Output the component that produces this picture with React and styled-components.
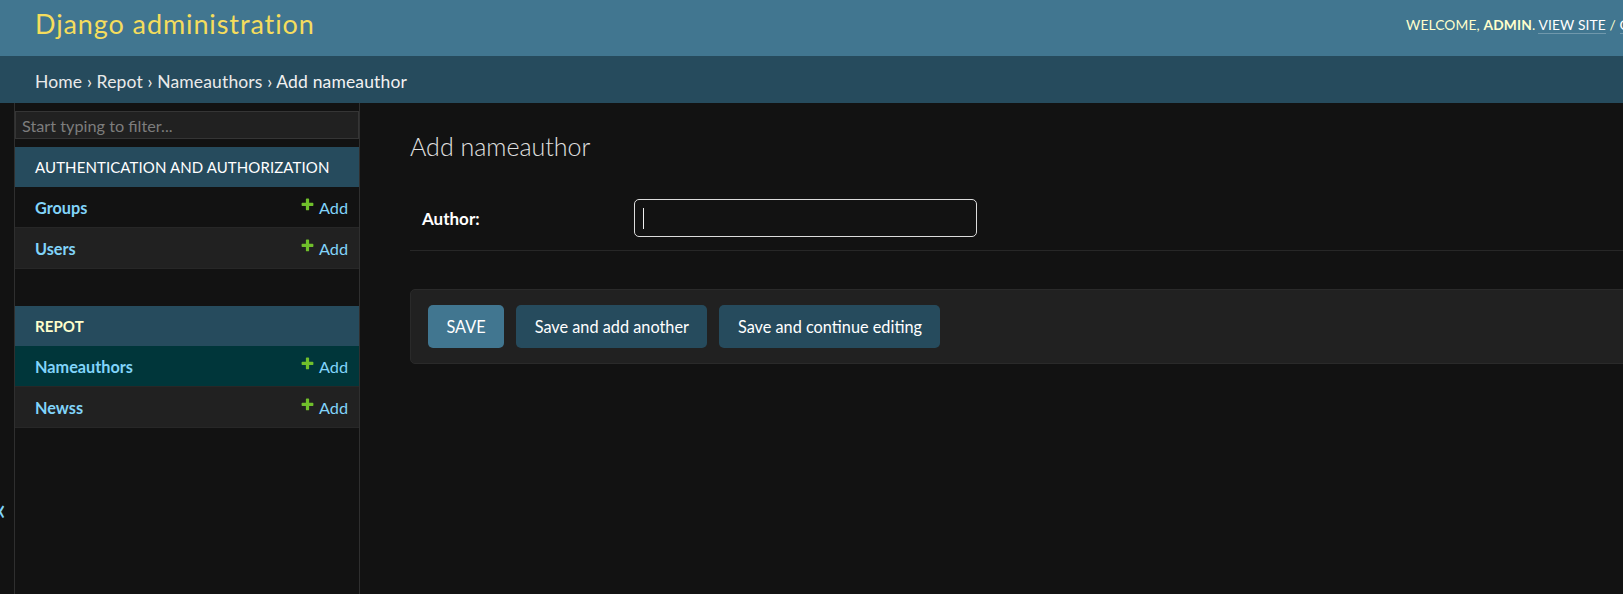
import React from "react";
import styled, { createGlobalStyle } from "styled-components";

const GlobalStyle = createGlobalStyle`
  html, body {
    margin: 0;
    padding: 0;
    background: #121212;
    overflow: hidden;
  }
  body {
    font-family: Lato, "Open Sans", sans-serif;
    color: #eeeeee;
  }
`;

const Page = styled.div`
  width: 1760px;
  margin-left: -15px;
  min-height: 594px;
  display: flex;
  flex-direction: column;
  background: #121212;
`;

const Header = styled.header`
  height: 56px;
  box-sizing: border-box;
  padding: 0 50px 8px;
  display: flex;
  align-items: center;
  background: #417690;
`;

const Branding = styled.div`
  flex: 0 0 1371px;
`;

const SiteName = styled.h1`
  margin: 0;
  font-size: 27px;
  font-weight: 400;
  letter-spacing: 0.9px;
  color: #f5dd5d;
  line-height: 1.2;
`;

const UserTools = styled.div`
  font-size: 13.75px;
  letter-spacing: 0.15px;
  text-transform: uppercase;
  color: #ffffcc;
  white-space: nowrap;

  strong {
    font-weight: 700;
  }
`;

const ToolLink = styled.a`
  color: #ffffff;
  text-decoration: none;
  border-bottom: 1px solid rgba(255, 255, 255, 0.25);
`;

const Breadcrumbs = styled.nav`
  height: 47px;
  box-sizing: border-box;
  padding: 3px 50px 0;
  display: flex;
  align-items: center;
  background: #264b5d;
  color: #f2f2f2;
  font-size: 17.5px;
  letter-spacing: 0.15px;
`;

const Crumb = styled.a`
  color: #eaeaea;
  text-decoration: none;
`;

const Main = styled.div`
  display: flex;
  flex: 1;
  min-height: 491px;
`;

const Toggle = styled.button`
  flex: 0 0 30px;
  width: 30px;
  box-sizing: border-box;
  border: 0;
  border-right: 1px solid #2f2f2f;
  background: #121212;
  color: #81d4fa;
  font-family: Lato, sans-serif;
  font-size: 30px;
  line-height: 1;
  padding: 390px 0 0;
  display: flex;
  justify-content: center;
  align-items: flex-start;
`;

const Sidebar = styled.nav`
  flex: 0 0 345px;
  box-sizing: border-box;
  border-right: 1px solid #2f2f2f;
  padding-top: 8px;
`;

const Filter = styled.input`
  display: block;
  width: 100%;
  height: 28px;
  box-sizing: border-box;
  margin: 0 0 8px;
  padding: 0 6px;
  border: 1px solid #353535;
  background: #212121;
  color: #eeeeee;
  font-family: Lato, sans-serif;
  font-size: 16.25px;

  &::placeholder {
    color: #7d7d7d;
  }
`;

const Module = styled.div`
  margin-bottom: 37px;
`;

const Caption = styled.div`
  height: 40px;
  display: flex;
  align-items: center;
  padding-left: 20px;
  background: #264b5d;
  color: ${(p) => (p.$current ? "#ffffcc" : "#ffffff")};
  font-weight: ${(p) => (p.$current ? 700 : 400)};
  font-size: 15px;
  letter-spacing: 0.1px;
  text-transform: uppercase;
  white-space: nowrap;
`;

const rowBg = {
  plain: "#121212",
  alt: "#212121",
  selected: "#00363a",
};

const Row = styled.div`
  height: 41px;
  box-sizing: border-box;
  display: flex;
  align-items: center;
  justify-content: space-between;
  padding: 0 11px 0 20px;
  border-bottom: 1px solid #272727;
  background: ${(p) => rowBg[p.$variant]};
  font-size: 16.25px;
`;

const ModelLink = styled.a`
  color: #81d4fa;
  font-weight: 700;
  text-decoration: none;
`;

const AddLink = styled.a`
  display: flex;
  align-items: center;
  gap: 4px;
  color: #81d4fa;
  text-decoration: none;

  svg {
    margin-top: -5px;
  }
`;

const Content = styled.div`
  flex: 1;
  padding: 28px 50px 25px;
`;

const Title = styled.h1`
  margin: 0 0 25px;
  font-size: 25px;
  line-height: 30px;
  font-weight: 300;
  color: #e0e0e0;
`;

const Fieldset = styled.div`
  margin-bottom: 38px;
`;

const FormRow = styled.div`
  display: flex;
  align-items: center;
  padding: 13px 12px;
  border-bottom: 1px solid #272727;
`;

const Label = styled.label`
  flex: 0 0 212px;
  font-size: 17px;
  font-weight: 700;
  color: #ffffff;
`;

const TextBox = styled.div`
  width: 343px;
  height: 38px;
  box-sizing: border-box;
  display: flex;
  align-items: center;
  padding: 0 8px;
  border: 1px solid #dcdcdc;
  border-radius: 5px;
  background: #121212;
`;

const Caret = styled.span`
  width: 1px;
  height: 21px;
  background: #eeeeee;
`;

const SubmitRow = styled.div`
  display: flex;
  gap: 12px;
  padding: 15px 17px;
  background: #212121;
  border: 1px solid #2a2a2a;
  border-radius: 5px;
`;

const Button = styled.button`
  height: 43px;
  padding: 0 18.5px;
  border: 0;
  border-radius: 5px;
  background: ${(p) => (p.$default ? "#417690" : "#264b5d")};
  color: #ffffff;
  font-family: Lato, sans-serif;
  font-size: 16.3px;
  text-transform: ${(p) => (p.$default ? "uppercase" : "none")};
`;

const PlusIcon = () => (
  <svg width="15" height="15" viewBox="0 0 1792 1792">
    <path
      fill="#70bf2b"
      d="M1600 796v192q0 40-28 68t-68 28h-416v416q0 40-28 68t-68 28h-192q-40 0-68-28t-28-68v-416h-416q-40 0-68-28t-28-68v-192q0-40 28-68t68-28h416v-416q0-40 28-68t68-28h192q40 0 68 28t28 68v416h416q40 0 68 28t28 68z"
    />
  </svg>
);

const apps = [
  {
    name: "Authentication and Authorization",
    models: ["Groups", "Users"],
  },
  {
    name: "Repot",
    current: true,
    models: ["Nameauthors", "Newss"],
    selected: "Nameauthors",
  },
];

const App = () => {
  return (
    <>
      <GlobalStyle />
      <Page>
        <Header>
          <Branding>
            <SiteName>Django administration</SiteName>
          </Branding>
          <UserTools>
            Welcome, <strong>admin</strong>. <ToolLink href="#">View site</ToolLink> /{" "}
            <ToolLink href="#">Change password</ToolLink> / <ToolLink href="#">Log out</ToolLink>
          </UserTools>
        </Header>
        <Breadcrumbs>
          <Crumb href="#">Home</Crumb>&nbsp;›&nbsp;<Crumb href="#">Repot</Crumb>&nbsp;›&nbsp;
          <Crumb href="#">Nameauthors</Crumb>&nbsp;›&nbsp;Add nameauthor
        </Breadcrumbs>
        <Main>
          <Toggle>«</Toggle>
          <Sidebar>
            <Filter placeholder="Start typing to filter..." />
            {apps.map((app) => (
              <Module key={app.name}>
                <Caption $current={app.current}>{app.name}</Caption>
                {app.models.map((model, i) => (
                  <Row
                    key={model}
                    $variant={app.selected === model ? "selected" : i % 2 ? "alt" : "plain"}
                  >
                    <ModelLink href="#">{model}</ModelLink>
                    <AddLink href="#">
                      <PlusIcon />
                      Add
                    </AddLink>
                  </Row>
                ))}
              </Module>
            ))}
          </Sidebar>
          <Content>
            <Title>Add nameauthor</Title>
            <Fieldset>
              <FormRow>
                <Label>Author:</Label>
                <TextBox>
                  <Caret />
                </TextBox>
              </FormRow>
            </Fieldset>
            <SubmitRow>
              <Button $default>Save</Button>
              <Button>Save and add another</Button>
              <Button>Save and continue editing</Button>
            </SubmitRow>
          </Content>
        </Main>
      </Page>
    </>
  );
};

export default App;
